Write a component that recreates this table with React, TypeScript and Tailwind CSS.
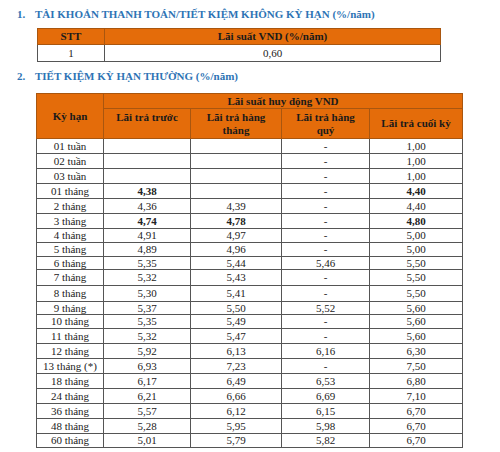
import React from "react";

type Row = {
  term: string;
  h: number;
  pre: string;
  monthly: string;
  quarterly: string;
  end: string;
  bold?: boolean;
};

const rows: Row[] = [
  { term: "01 tuần", h: 15, pre: "", monthly: "", quarterly: "-", end: "1,00" },
  { term: "02 tuần", h: 15, pre: "", monthly: "", quarterly: "-", end: "1,00" },
  { term: "03 tuần", h: 15, pre: "", monthly: "", quarterly: "-", end: "1,00" },
  { term: "01 tháng", h: 15, pre: "4,38", monthly: "", quarterly: "-", end: "4,40", bold: true },
  { term: "2 tháng", h: 15, pre: "4,36", monthly: "4,39", quarterly: "-", end: "4,40" },
  { term: "3 tháng", h: 15, pre: "4,74", monthly: "4,78", quarterly: "-", end: "4,80", bold: true },
  { term: "4 tháng", h: 14, pre: "4,91", monthly: "4,97", quarterly: "-", end: "5,00" },
  { term: "5 tháng", h: 14, pre: "4,89", monthly: "4,96", quarterly: "-", end: "5,00" },
  { term: "6 tháng", h: 13, pre: "5,35", monthly: "5,44", quarterly: "5,46", end: "5,50" },
  { term: "7 tháng", h: 16, pre: "5,32", monthly: "5,43", quarterly: "-", end: "5,50" },
  { term: "8 tháng", h: 16, pre: "5,30", monthly: "5,41", quarterly: "-", end: "5,50" },
  { term: "9 tháng", h: 13, pre: "5,37", monthly: "5,50", quarterly: "5,52", end: "5,60" },
  { term: "10 tháng", h: 14, pre: "5,35", monthly: "5,49", quarterly: "-", end: "5,60" },
  { term: "11 tháng", h: 15, pre: "5,32", monthly: "5,47", quarterly: "-", end: "5,60" },
  { term: "12 tháng", h: 15, pre: "5,92", monthly: "6,13", quarterly: "6,16", end: "6,30" },
  { term: "13 tháng (*)", h: 15, pre: "6,93", monthly: "7,23", quarterly: "-", end: "7,50" },
  { term: "18 tháng", h: 15, pre: "6,17", monthly: "6,49", quarterly: "6,53", end: "6,80" },
  { term: "24 tháng", h: 15, pre: "6,21", monthly: "6,66", quarterly: "6,69", end: "7,10" },
  { term: "36 tháng", h: 15, pre: "5,57", monthly: "6,12", quarterly: "6,15", end: "6,70" },
  { term: "48 tháng", h: 15, pre: "5,28", monthly: "5,95", quarterly: "5,98", end: "6,70" },
  { term: "60 tháng", h: 14, pre: "5,01", monthly: "5,79", quarterly: "5,82", end: "6,70" },
];

const serif = "font-['Liberation_Serif','Times_New_Roman',serif]";
const cell = `${serif} border border-[#555] p-0 text-center leading-none align-middle`;
const head = `${serif} border border-[#a9560f] p-0 text-center font-bold leading-[13px] text-[#1a1a1a]`;

export default function App() {
  return (
    <div className={`${serif} w-[500px] h-[452px] bg-white text-[#222] text-[11px] overflow-hidden`}>
      <h2 className="flex pt-[6px] pl-[17px] h-[28px] text-[11px] font-bold text-[#2e74b5]">
        <span className="w-[18px]">1.</span>
        <span>TÀI KHOẢN THANH TOÁN/TIẾT KIỆM KHÔNG KỲ HẠN (%/năm)</span>
      </h2>

      <table className="ml-[37px] border-collapse table-fixed w-[404px]">
        <colgroup>
          <col className="w-[67px]" />
          <col />
        </colgroup>
        <thead>
          <tr className="h-[16px] bg-[#e46c0a]">
            <th className={head}>STT</th>
            <th className={head}>Lãi suất VND (%/năm)</th>
          </tr>
        </thead>
        <tbody>
          <tr className="h-[17px]">
            <td className={cell}>1</td>
            <td className={cell}>0,60</td>
          </tr>
        </tbody>
      </table>

      <h2 className="flex pt-[6px] pl-[17px] h-[31px] text-[11px] font-bold text-[#2e74b5]">
        <span className="w-[18px]">2.</span>
        <span>TIẾT KIỆM KỲ HẠN THƯỜNG (%/năm)</span>
      </h2>

      <table className="ml-[36px] border-collapse table-fixed w-[426px]">
        <colgroup>
          <col className="w-[67px]" />
          <col className="w-[87px]" />
          <col className="w-[91px]" />
          <col className="w-[88px]" />
          <col className="w-[93px]" />
        </colgroup>
        <thead className="bg-[#e46c0a]">
          <tr className="h-[15px]">
            <th rowSpan={2} className={head}>Kỳ hạn</th>
            <th colSpan={4} className={head}>Lãi suất huy động VND</th>
          </tr>
          <tr className="h-[30px]">
            <th className={`${head} align-top pt-[2px]`}>Lãi trả trước</th>
            <th className={head}>Lãi trả hàng<br />tháng</th>
            <th className={head}>Lãi trả hàng<br />quý</th>
            <th className={head}>Lãi trả cuối kỳ</th>
          </tr>
        </thead>
        <tbody>
          {rows.map((r) => (
            <tr key={r.term} style={{ height: r.h }}>
              <td className={cell}>{r.term}</td>
              <td className={`${cell} ${r.bold ? "font-bold" : ""}`}>{r.pre}</td>
              <td className={`${cell} ${r.bold ? "font-bold" : ""}`}>{r.monthly}</td>
              <td className={cell}>{r.quarterly}</td>
              <td className={`${cell} ${r.bold ? "font-bold" : ""}`}>{r.end}</td>
            </tr>
          ))}
        </tbody>
      </table>
    </div>
  );
}
